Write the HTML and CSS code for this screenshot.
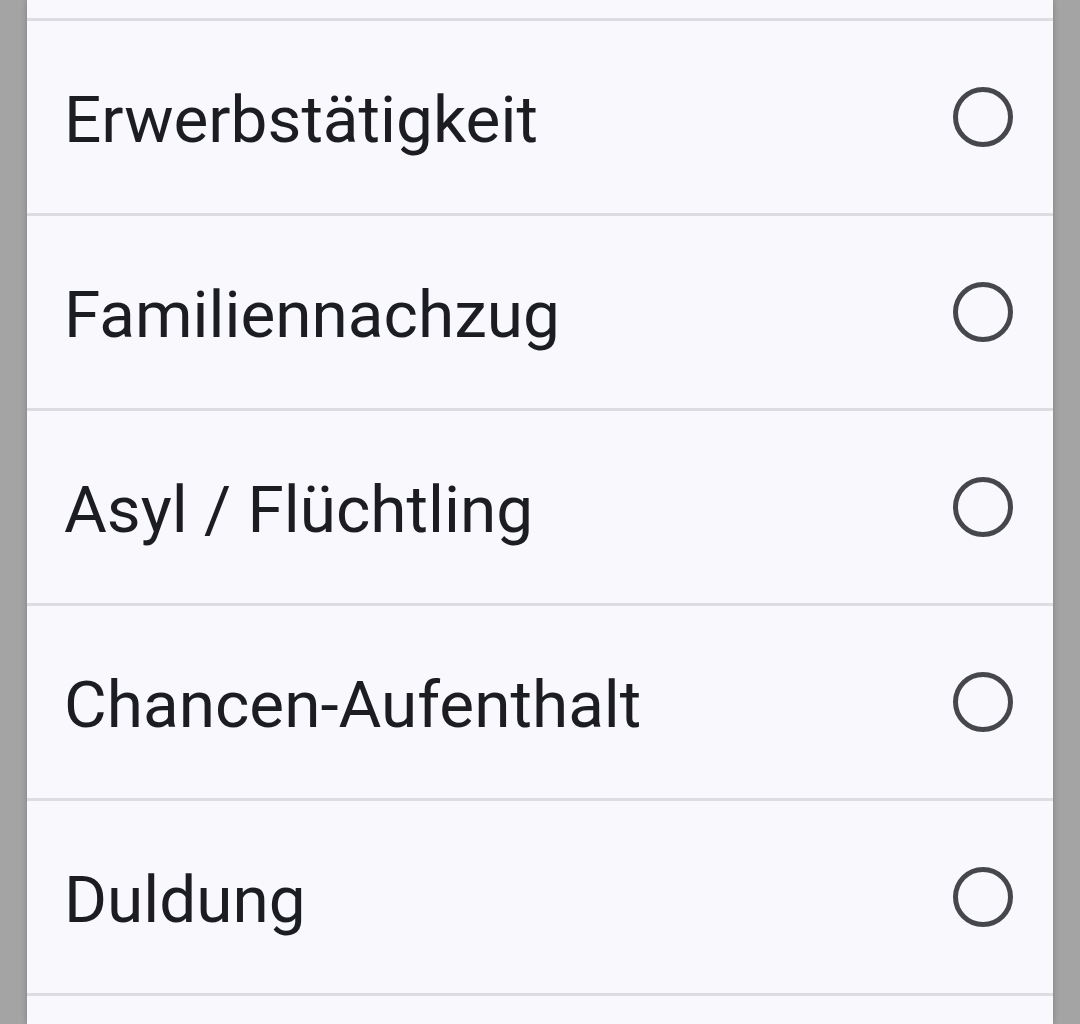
FILE: index.html
```html
<!DOCTYPE html>
<html lang="de">
<head>
<meta charset="utf-8">
<link rel="stylesheet" href="styles.css">
</head>
<body>
<div class="sheet">
  <div class="row row-partial"></div>
  <div class="row"><span class="label">Erwerbstätigkeit</span><span class="radio"></span></div>
  <div class="row"><span class="label">Familiennachzug</span><span class="radio"></span></div>
  <div class="row"><span class="label">Asyl / Flüchtling</span><span class="radio"></span></div>
  <div class="row"><span class="label">Chancen-Aufenthalt</span><span class="radio"></span></div>
  <div class="row"><span class="label">Duldung</span><span class="radio"></span></div>
  <div class="row row-end"></div>
</div>
</body>
</html>
```
FILE: styles.css
```css
html, body {
  margin: 0;
  padding: 0;
  background: #a4a4a4;
  height: 1024px;
  overflow: hidden;
}
.sheet {
  margin-left: 27px;
  width: 1026px;
  background: #f8f8fd;
  height: 1024px;
  overflow: hidden;
  box-shadow: 0 0 6px rgba(0,0,0,0.25);
}
.row {
  display: flex;
  align-items: center;
  justify-content: space-between;
  height: 192px;
  border-top: 3px solid #dcdce2;
  padding: 0 40px 0 37px;
}
.row-partial {
  height: 18px;
  border-top: none;
}
.row-end {
  height: 26px;
}
.label {
  font-family: Roboto, "Liberation Sans", sans-serif;
  font-size: 65.7px;
  color: #1c1d22;
  line-height: 1;
  padding-top: 6px;
}
.radio {
  width: 50px;
  height: 50px;
  border: 5px solid #45474d;
  border-radius: 50%;
  flex: none;
}
```
